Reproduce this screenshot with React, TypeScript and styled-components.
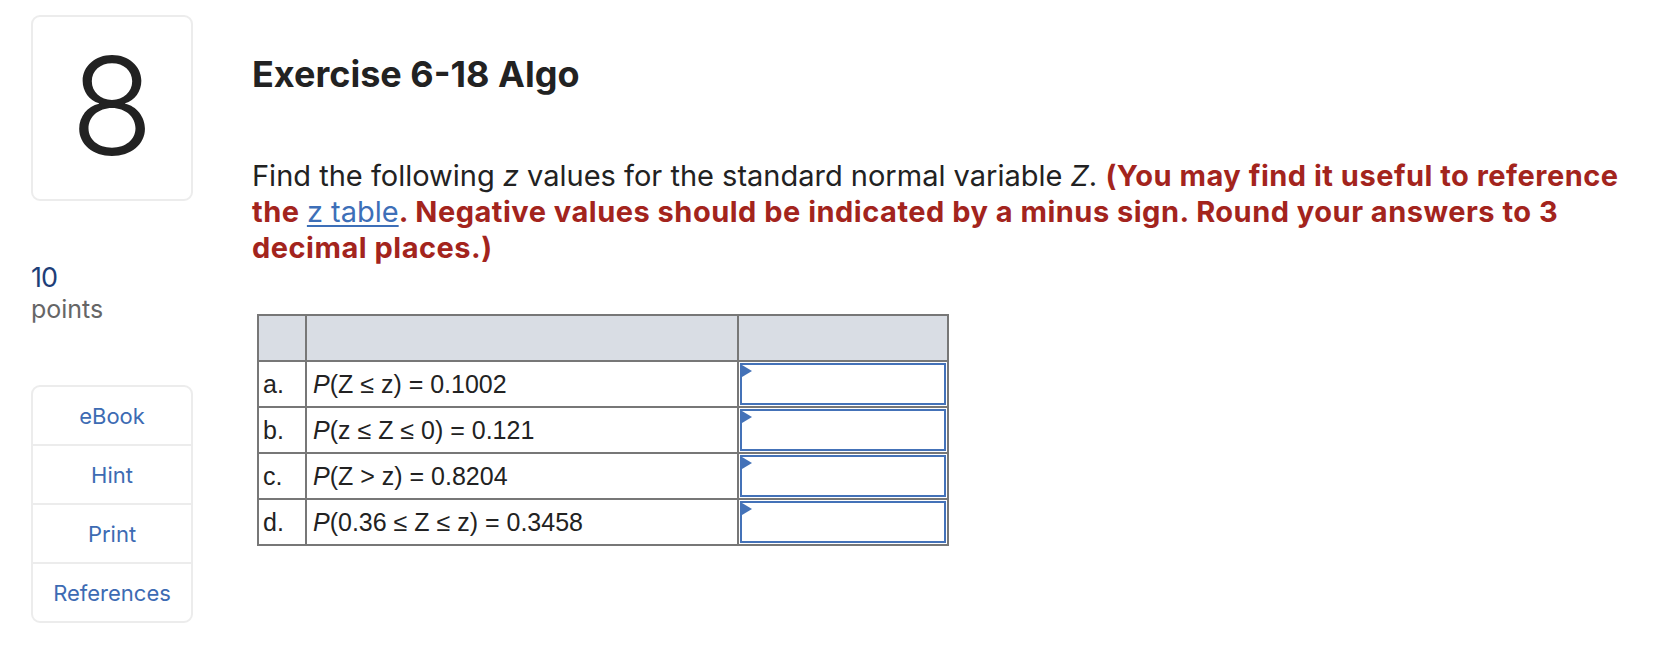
import React from "react";
import styled, { createGlobalStyle } from "styled-components";

const GlobalStyle = createGlobalStyle`
  html, body {
    margin: 0;
    padding: 0;
    background: #fff;
  }
  body {
    font-family: Inter, Lato, "Liberation Sans", sans-serif;
    color: #222;
  }
`;

type Row = { label: string; expr: React.ReactNode };

const rows: Row[] = [
  { label: "a.", expr: <>(Z ≤ z) = 0.1002</> },
  { label: "b.", expr: <>(z ≤ Z ≤ 0) = 0.121</> },
  { label: "c.", expr: <>(Z &gt; z) = 0.8204</> },
  { label: "d.", expr: <>(0.36 ≤ Z ≤ z) = 0.3458</> },
];

const tools = ["eBook", "Hint", "Print", "References"];

export default function App() {
  return (
    <>
      <GlobalStyle />
      <Page>
        <Side>
          <NumberCard>8</NumberCard>
          <Points>
            <PointsValue>10</PointsValue>
            <PointsLabel>points</PointsLabel>
          </Points>
          <ToolList>
            {tools.map((t) => (
              <ToolItem key={t}>{t}</ToolItem>
            ))}
          </ToolList>
        </Side>

        <Main>
          <Title>Exercise 6-18 Algo</Title>
          <Prompt>
            Find the following <i>z</i> values for the standard normal variable <i>Z</i>.{" "}
            <Strong>
              (You may find it useful to reference the <Link href="#">z table</Link>. Negative values should be
              indicated by a minus sign. Round your answers to 3 decimal places.)
            </Strong>
          </Prompt>

          <AnswerTable>
            <thead>
              <tr>
                <HeadCell style={{ width: 46 }} />
                <HeadCell style={{ width: 430 }} />
                <HeadCell />
              </tr>
            </thead>
            <tbody>
              {rows.map((r) => (
                <tr key={r.label}>
                  <LabelCell>{r.label}</LabelCell>
                  <ExprCell>
                    <i>P</i>
                    {r.expr}
                  </ExprCell>
                  <InputCell>
                    <AnswerBox>
                      <Flag />
                    </AnswerBox>
                  </InputCell>
                </tr>
              ))}
            </tbody>
          </AnswerTable>
        </Main>
      </Page>
    </>
  );
}

const Page = styled.div`
  display: flex;
  align-items: flex-start;
  gap: 59px;
  padding: 15px 0 0 31px;
`;

const Side = styled.aside`
  width: 162px;
  flex-shrink: 0;
  display: flex;
  flex-direction: column;
`;

const NumberCard = styled.div`
  box-sizing: border-box;
  height: 186px;
  border: 2px solid #ececec;
  border-radius: 9px;
  display: flex;
  align-items: center;
  justify-content: center;
  font-weight: 300;
  font-size: 136px;
  line-height: 1;
  color: #222;
  padding-bottom: 4px;
`;

const Points = styled.div`
  margin-top: 61px;
  display: flex;
  flex-direction: column;
`;

const PointsValue = styled.div`
  font-size: 27px;
  line-height: 32px;
  color: #1d3e78;
  letter-spacing: -1px;
`;

const PointsLabel = styled.div`
  font-size: 25px;
  line-height: 30px;
  color: #666;
`;

const ToolList = styled.div`
  margin-top: 61px;
  border: 2px solid #ececec;
  border-radius: 9px;
  overflow: hidden;
`;

const ToolItem = styled.div`
  height: 57px;
  display: flex;
  align-items: center;
  justify-content: center;
  font-size: 22px;
  color: #3d6bb3;
  border-top: 2px solid #ececec;

  &:first-child {
    border-top: none;
  }
`;

const Main = styled.main`
  flex: 1;
  padding-top: 38px;
  padding-right: 40px;
`;

const Title = styled.h1`
  margin: 0;
  font-size: 36px;
  line-height: 1.2;
  font-weight: 700;
  color: #222;
`;

const Prompt = styled.p`
  margin: 62px 0 0;
  font-size: 29px;
  line-height: 36px;
  color: #222;
  max-width: 1390px;

  i {
    font-style: italic;
  }
`;

const Strong = styled.strong`
  font-weight: 700;
  color: #a3241d;
  letter-spacing: 0.5px;
`;

const Link = styled.a`
  font-weight: 400;
  color: #3d6fb8;
  letter-spacing: 0;
  text-decoration: underline;
  text-underline-offset: 3px;
`;

const AnswerTable = styled.table`
  margin: 48px 0 0 5px;
  border-collapse: collapse;
  width: 692px;
  font-family: "Liberation Sans", Arial, sans-serif;
  font-size: 25px;
  color: #222;
`;

const HeadCell = styled.th`
  height: 44px;
  background: #d9dde4;
  border: 2px solid #777;
  padding: 0;
`;

const BodyCell = styled.td`
  height: 42px;
  border: 2px solid #777;
  vertical-align: middle;
`;

const LabelCell = styled(BodyCell)`
  padding: 0 0 0 4px;
`;

const ExprCell = styled(BodyCell)`
  padding: 0 0 0 6px;
  white-space: nowrap;
`;

const InputCell = styled(BodyCell)`
  padding: 1px;
`;

const AnswerBox = styled.div`
  position: relative;
  box-sizing: border-box;
  height: 42px;
  border: 2px solid #4472b8;
  background: #fff;
`;

const Flag = styled.span`
  position: absolute;
  top: 0;
  left: 0;
  width: 0;
  height: 0;
  border-top: 6px solid transparent;
  border-bottom: 6px solid transparent;
  border-left: 10px solid #4472b8;
`;
